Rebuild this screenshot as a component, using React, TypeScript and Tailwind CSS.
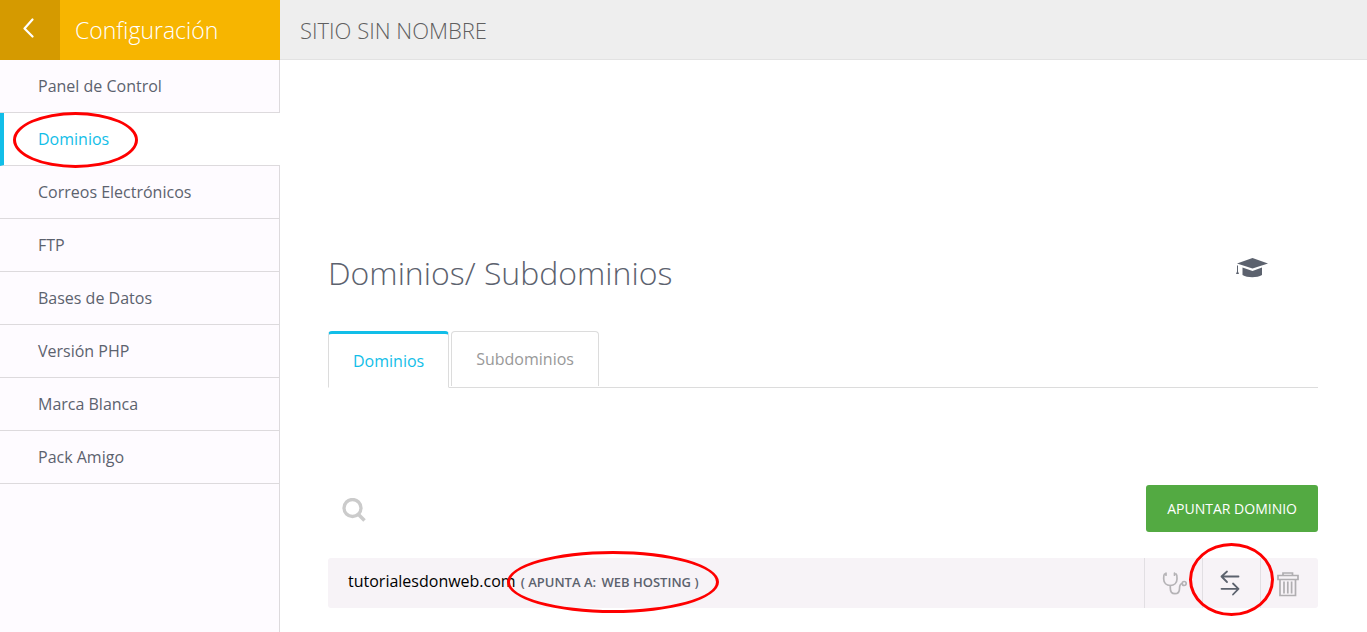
import type { ReactNode } from "react";

const menu = [
    "Panel de Control",
    "Dominios",
    "Correos Electrónicos",
    "FTP",
    "Bases de Datos",
    "Versión PHP",
    "Marca Blanca",
    "Pack Amigo",
];

const active = "Dominios";

function Highlight({ className }: { className: string }) {
    return <span aria-hidden="true" className={`pointer-events-none absolute z-10 rounded-[50%] border-3 border-[#fe0000] ${className}`} />;
}

function Action({ label, children }: { label: string; children: ReactNode }) {
    return (
        <div className="relative flex w-[58px] border-l border-[#e2dfe3]">
            <button type="button" aria-label={label} className="flex flex-1 items-center justify-center pr-[3px]">
                {children}
            </button>
        </div>
    );
}

function Sidebar() {
    return (
        <aside className="flex w-[280px] shrink-0 flex-col bg-[#fefbff]">
            {/* Header */}
            <div className="flex h-[60px] bg-[#f7b500]">
                <button type="button" aria-label="Volver" className="flex w-[60px] items-center justify-center bg-[#d59a00] pr-1 pb-1">
                    <svg width="12" height="20" viewBox="0 0 12 20" fill="none" stroke="white" strokeWidth="2.2" strokeLinecap="round" strokeLinejoin="round">
                        <path d="M10.500 1.500 2.500 10.500l8 8" />
                    </svg>
                </button>
                <h2 className="pl-[15px] text-[23px] leading-[60px] font-light text-white">Configuración</h2>
            </div>

            {/* Menu */}
            <nav>
                <ul>
                    {menu.map((item) => (
                        <li key={item} className="relative">
                            <a
                                href="#"
                                aria-current={item === active ? "page" : undefined}
                                className={
                                    item === active
                                        ? "block h-[53px] border-b border-l-4 border-b-[#dddadd] border-l-[#12bee8] bg-white pl-[34px] leading-[52px] text-[#12bee8]"
                                        : "block h-[53px] border-r border-b border-[#dddadd] pl-[38px] leading-[52px] text-[#5c626e]"
                                }
                            >
                                {item}
                            </a>
                            {item === active && <Highlight className="-top-px left-[13px] h-14 w-[125px]" />}
                        </li>
                    ))}
                </ul>
            </nav>
            <div className="flex-1 border-r border-[#dddadd]" />
        </aside>
    );
}

export default function App() {
    return (
        <div className="flex min-h-screen bg-white font-['Open_Sans',sans-serif] text-base">
            <Sidebar />

            <div className="min-w-0 flex-1">
                <header className="h-[60px] border-b border-[#e2e2e2] bg-[#eeeeee] pl-5">
                    <p className="text-[22px] leading-[60px] font-light text-[#5f5f5f]">SITIO SIN NOMBRE</p>
                </header>

                <main className="pt-[188px] pr-[49px] pb-6 pl-12">
                    <div className="flex items-start justify-between pr-[50px]">
                        <h1 className="text-[32px] leading-[50px] font-light text-[#5c626e]">Dominios/ Subdominios</h1>
                        <a href="#" aria-label="Tutoriales" className="mt-2 text-[#5c626e]">
                            <svg width="32" height="24" viewBox="0 0 32 24" fill="currentColor">
                                <path d="M16.500 2 32 7.500 16.500 12.500 1 7.500Z" />
                                <path d="M6.500 11.500 16.500 15 26 11.500v7.500c-5 3-14.500 3-19.500 0Z" />
                                <path d="M1 9.500h1v6l1 2.500H0l1-2.500Z" />
                            </svg>
                        </a>
                    </div>

                    {/* Tabs */}
                    <div role="tablist" className="mt-[33px] flex gap-[2px] border-b border-[#dcdcdc]">
                        <button type="button" role="tab" aria-selected="true" className="-mb-px h-[57px] rounded-t border border-t-3 border-[#dcdcdc] border-t-[#12bee8] border-b-white bg-white px-6 text-[#12bee8]">
                            Dominios
                        </button>
                        <button type="button" role="tab" aria-selected="false" className="h-[55px] rounded-t border border-b-0 border-[#dcdcdc] px-6 text-[#999999]">
                            Subdominios
                        </button>
                    </div>

                    {/* Search */}
                    <div className="mt-[97px] flex h-[47px] items-center justify-between">
                        <form className="flex items-center gap-3 pt-[2px] pl-[14px]">
                            <label htmlFor="search" aria-label="Buscar dominio">
                                <svg width="24" height="24" viewBox="0 0 24 24" fill="none" stroke="#cbcbcb">
                                    <circle cx="10.500" cy="10" r="8.500" strokeWidth="3.300" />
                                    <path d="m16.500 16.500 6 6" strokeWidth="3.600" />
                                </svg>
                            </label>
                            <input id="search" type="text" className="w-64 outline-none" />
                        </form>
                        <button type="button" className="h-[47px] rounded-[3px] bg-[#53aa42] px-[21px] text-sm text-white">
                            APUNTAR DOMINIO
                        </button>
                    </div>

                    {/* Domain */}
                    <div className="mt-[26px] flex h-[50px] rounded-[3px] bg-[#f7f3f7]">
                        <div className="flex flex-1 items-baseline gap-[5px] pl-5 leading-[46px] text-black">
                            <span>tutorialesdonweb.com</span>
                            <span className="relative text-[13px] leading-[46px] font-semibold text-[#5c626e]">
                                ( APUNTA A: <span className="ml-[2px]">WEB HOSTING</span> )
                                <Highlight className="-top-2 -left-[14px] h-[62px] w-[212px]" />
                            </span>
                        </div>
                        <Action label="Diagnosticar">
                            <svg width="30" height="24" viewBox="0 0 30 24" fill="none" stroke="#b5b3b6" strokeWidth="1.700" strokeLinecap="round">
                                <path d="M9 3H7.500C6.500 4 6.700 6 6.700 8c0 4 2.800 6.500 6.600 6.500S20 12 20 8c0-2 .2-4-.8-5h-1.700M9 2.200v2M17.500 2.200v2" />
                                <path d="M13.300 14.500v2.500c0 3.800 2 5.700 4.500 5.700s4.700-1.700 4.700-5c0-3 .8-5 2.800-5.200" />
                                <circle cx="27.200" cy="12.500" r="2" />
                            </svg>
                        </Action>
                        <div className="relative flex">
                            <Action label="Cambiar destino">
                                <svg width="20" height="26" viewBox="0 0 20 26" fill="none" stroke="#5c626e" strokeWidth="1.800" strokeLinecap="round" strokeLinejoin="round">
                                    <path d="M18.500 6.500H1.500M7 1.500 1.500 6.500 7 12" />
                                    <path d="M1.500 18.800h17M13 13.500l5.500 5.300L13 24.500" />
                                </svg>
                            </Action>
                            <Highlight className="-top-[15px] -left-[13px] h-[73px] w-[85px]" />
                        </div>
                        <Action label="Eliminar">
                            <svg width="22" height="28" viewBox="0 0 22 28" fill="none" stroke="#b0aeb1" strokeWidth="1.700">
                                <path d="M6 6.500V4h9.500v2.500M1 6.500h20v4H1ZM3 10.500v16h15.500v-16M7 12.500v12M10.800 12.500v12M14.600 12.500v12" />
                            </svg>
                        </Action>
                    </div>
                </main>
            </div>
        </div>
    );
}
